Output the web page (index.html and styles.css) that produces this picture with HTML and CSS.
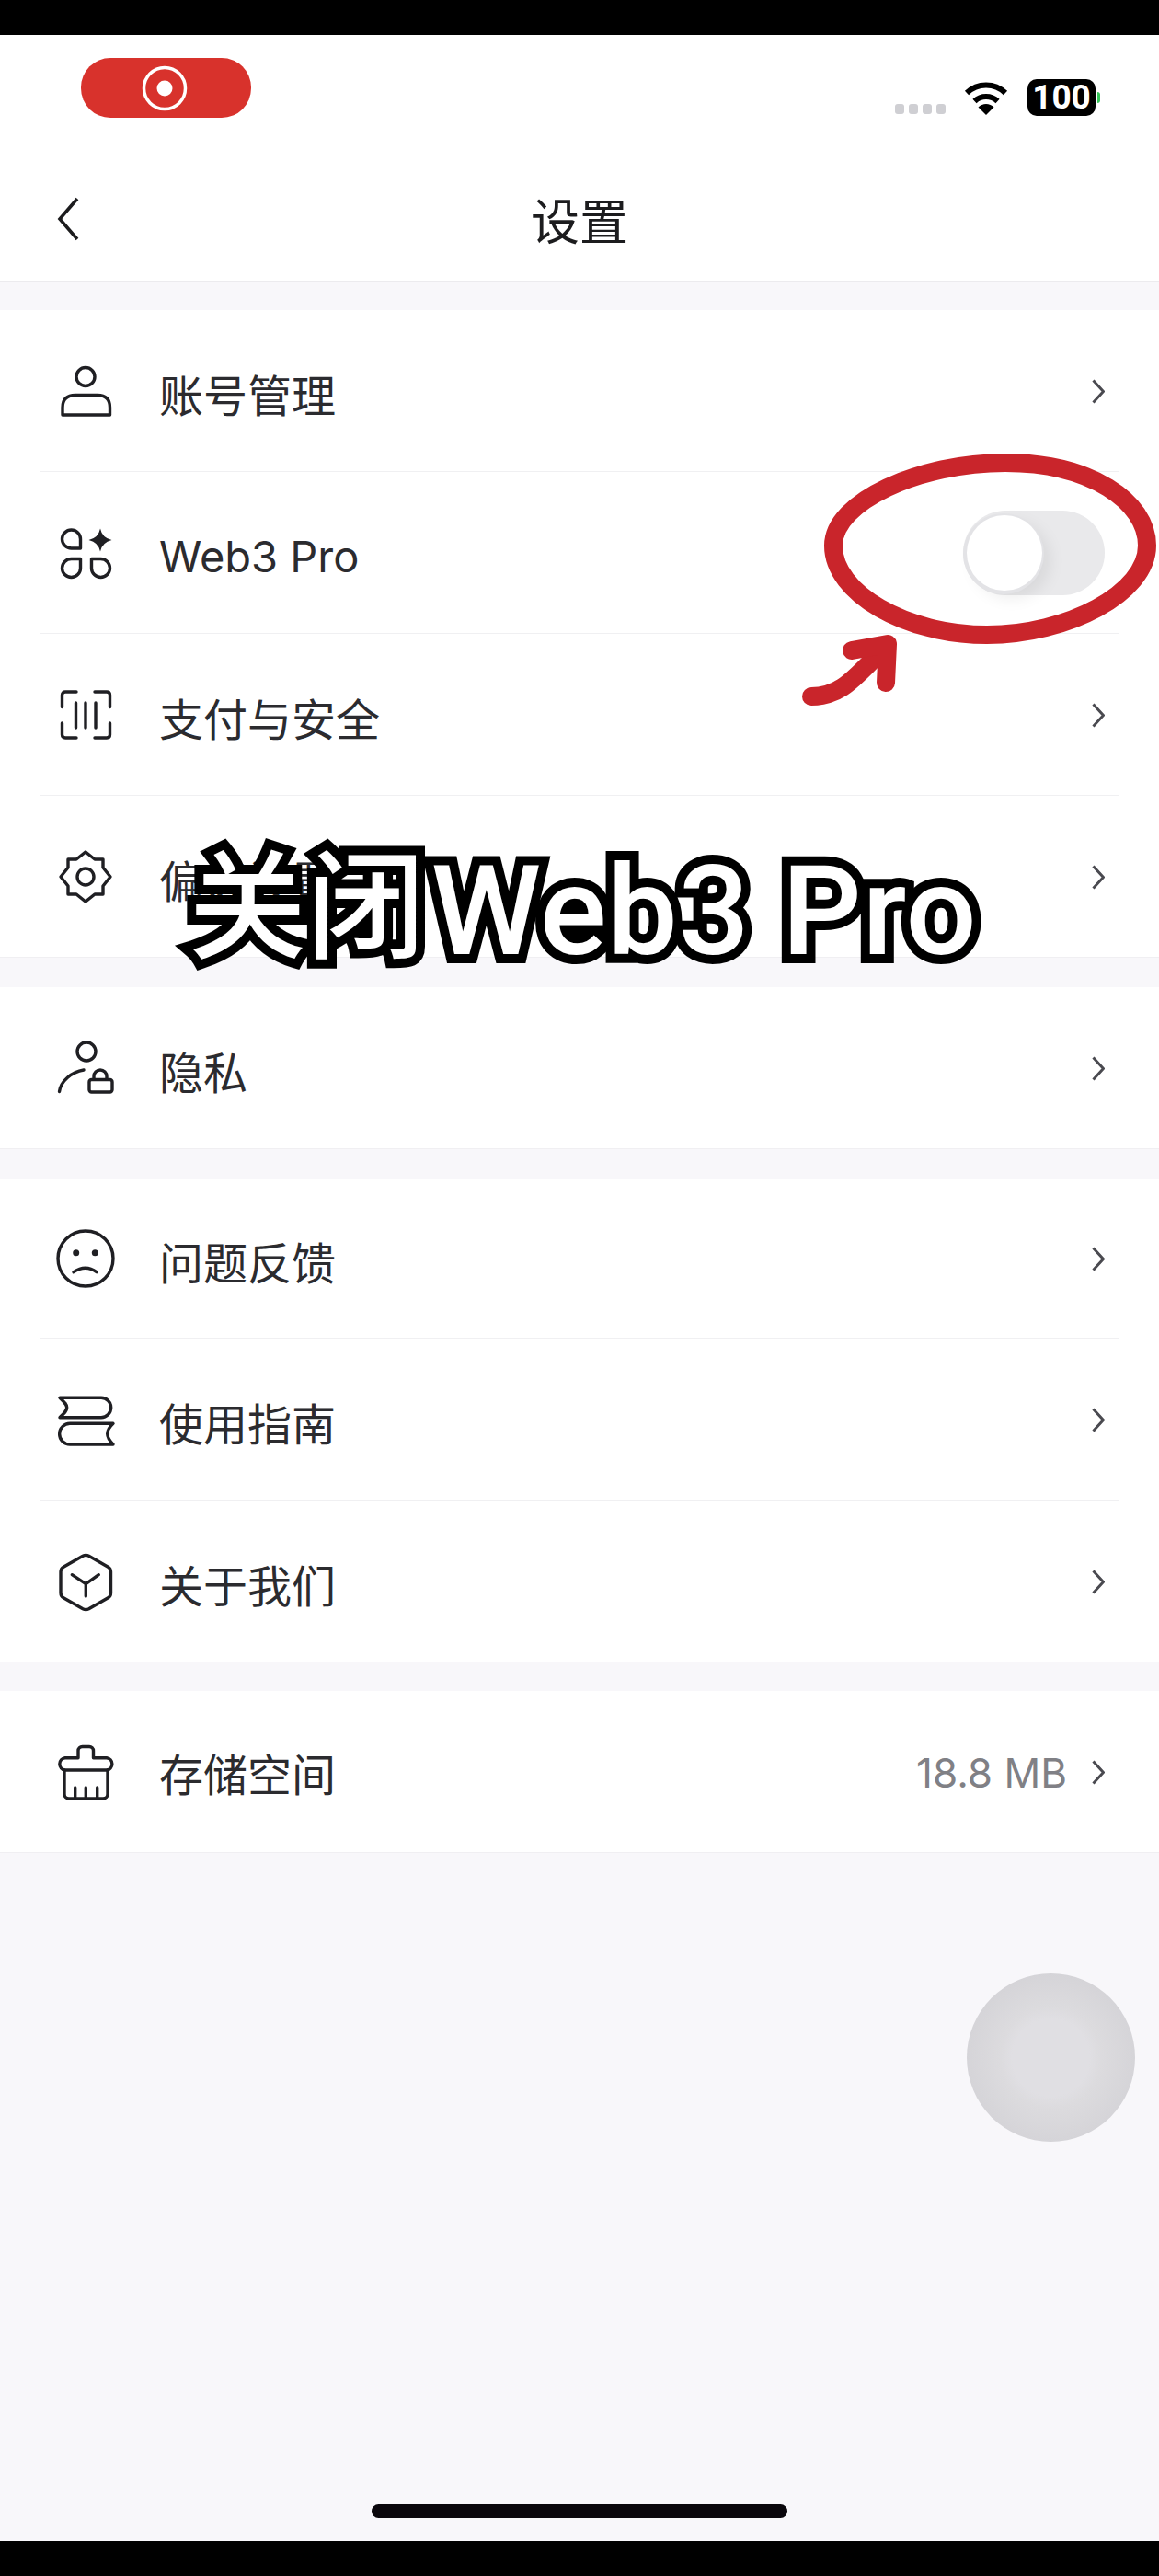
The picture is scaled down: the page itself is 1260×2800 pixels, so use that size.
FILE: index.html
```html
<!DOCTYPE html>
<html lang="zh-CN">
<head>
  <meta charset="UTF-8" />
  <meta name="viewport" content="width=device-width, initial-scale=1.0"/>
  <title>设置</title>
  <link rel="stylesheet" href="styles.css">
</head>
<body>
  <div class="screen">
    <div class="black-bar"></div>

    <div class="status">
      <div class="rec-pill">
        <svg width="56" height="56" viewBox="0 0 56 56"><circle cx="28" cy="28" r="22.5" fill="none" stroke="#fff" stroke-width="3.5"/><circle cx="28" cy="28" r="8.5" fill="#fff"/></svg>
      </div>
      <div class="status-right">
        <div class="signal"><i></i><i></i><i></i><i></i></div>
        <svg class="wifi" width="48" height="37" viewBox="0 0 48 37"><path d="M3 13A30 30 0 0 1 45 13M11.5 22A18 18 0 0 1 36.5 22" fill="none" stroke="#000" stroke-width="6"/><path d="M24 37L15.5 28.5A12 12 0 0 1 32.5 28.5Z" fill="#000"/></svg>
        <div class="battery">100</div>
        <div class="battery-tip"></div>
      </div>
    </div>

    <div class="nav">
      <svg class="back" width="24" height="48" viewBox="0 0 24 48"><path d="M22 2L3 24L22 46" fill="none" stroke="#1c1c1e" stroke-width="3.6"/></svg>
      <div class="nav-title">设置</div>
    </div>

    <div class="content">
      <div class="group">
        <div class="row">
          <svg class="ico" viewBox="0 0 64 64"><circle cx="32" cy="16.5" r="10"/><path d="M7 58V50Q7 36.500 21 36.500H45Q58.500 36.500 58.500 50V58Z"/></svg>
          <span class="label">账号管理</span>
          <svg class="chev" viewBox="0 0 14 27"><path d="M1.500 1.500L12.500 13.500L1.500 25.500"/></svg>
        </div>
        <div class="row">
          <svg class="ico" viewBox="0 0 64 64"><path d="M16.500 7A10 10 0 0 0 16.500 27H26.500V17A10 10 0 0 0 16.500 7Z"/><path d="M16.500 58.500A10 10 0 0 1 16.500 38.500H26.500V48.500A10 10 0 0 1 16.500 58.500Z"/><path d="M48.500 58.500A10 10 0 0 0 48.500 38.500H38.500V48.500A10 10 0 0 0 48.500 58.500Z"/><path class="solid" d="M48 5.500Q50 15.500 60.500 18Q50 20.500 48 30.500Q46 20.500 35.500 18Q46 15.500 48 5.500Z"/></svg>
          <span class="label label-latin">Web3 Pro</span>
          <div class="toggle"><div class="knob"></div></div>
        </div>
        <div class="row">
          <svg class="ico" viewBox="0 0 64 64"><path d="M22 7H10Q6.500 7 6.500 10.500V23.500M42 7H55Q58.500 7 58.500 10.500V23.500M22 57H10Q6.500 57 6.500 53.500V41M42 57H55Q58.500 57 58.500 53.500V41M21.500 19V46M32 19V46M43 19V46"/></svg>
          <span class="label">支付与安全</span>
          <svg class="chev" viewBox="0 0 14 27"><path d="M1.500 1.500L12.500 13.500L1.500 25.500"/></svg>
        </div>
        <div class="row">
          <svg class="ico" viewBox="0 0 64 64"><path d="M32 5L42 13H51V22L59 32L51 42V51H42L32 59L22 51H13V42L5 32L13 22V13H22Z"/><circle cx="32" cy="32" r="9"/></svg>
          <span class="label">偏好设置</span>
          <svg class="chev" viewBox="0 0 14 27"><path d="M1.500 1.500L12.500 13.500L1.500 25.500"/></svg>
        </div>
      </div>

      <div class="group">
        <div class="row">
          <svg class="ico" viewBox="0 0 64 64"><circle cx="33" cy="14" r="10"/><path d="M3.500 57.500C5 46 17 36 30 34"/><rect x="36" y="44.500" width="25" height="13.500" rx="2.500"/><path d="M41 44V41A7 7 0 0 1 55 41V44"/></svg>
          <span class="label">隐私</span>
          <svg class="chev" viewBox="0 0 14 27"><path d="M1.500 1.500L12.500 13.500L1.500 25.500"/></svg>
        </div>
      </div>

      <div class="group">
        <div class="row row-short">
          <svg class="ico" viewBox="0 0 64 64"><circle cx="32" cy="32" r="30"/><circle class="solid" cx="21.700" cy="25.700" r="3.500"/><circle class="solid" cx="42.300" cy="25.700" r="3.500"/><path d="M19 46.700Q32 38 44 46.700"/></svg>
          <span class="label">问题反馈</span>
          <svg class="chev" viewBox="0 0 14 27"><path d="M1.500 1.500L12.500 13.500L1.500 25.500"/></svg>
        </div>
        <div class="row">
          <svg class="ico" viewBox="0 0 64 64"><path d="M4 8.300H49A10.700 10.700 0 0 1 49 29.700H4C9 25 11.700 22.500 11.700 19C11.700 15.500 9 13 4 8.300Z"/><path d="M62 36.300H15A11.300 11.300 0 0 0 15 59H62C57 54 55.700 51 55.700 47.600C55.700 44 57 41 62 36.300Z"/></svg>
          <span class="label">使用指南</span>
          <svg class="chev" viewBox="0 0 14 27"><path d="M1.500 1.500L12.500 13.500L1.500 25.500"/></svg>
        </div>
        <div class="row">
          <svg class="ico" viewBox="0 0 64 64"><path d="M29 4.200Q32.300 2.500 35.600 4.200L56.500 16.200Q59.500 18 59.500 21.500V44.500Q59.500 48 56.500 49.800L35.600 61.800Q32.300 63.500 29 61.800L8 49.800Q5 48 5 44.500V21.500Q5 18 8 16.200Z"/><path d="M17.300 24.700L32.300 34.700L46.300 24.700M32.300 34.700V48"/></svg>
          <span class="label">关于我们</span>
          <svg class="chev" viewBox="0 0 14 27"><path d="M1.500 1.500L12.500 13.500L1.500 25.500"/></svg>
        </div>
      </div>

      <div class="group">
        <div class="row">
          <svg class="ico" viewBox="0 0 64 64"><path d="M24 16.700V9A4.500 4.500 0 0 1 28.500 4.500H36A4.500 4.500 0 0 1 40.500 9V16.700H55A6.700 6.700 0 0 1 55 30H9.700A6.700 6.700 0 0 1 9.700 16.700Z"/><path d="M9 30V56A5 5 0 0 0 14 61H51A5 5 0 0 0 56 56V30M20.700 49V61M32.300 49V61M44.700 49V61"/></svg>
          <span class="label label-low">存储空间</span>
          <span class="value">18.8 MB</span>
          <svg class="chev" viewBox="0 0 14 27"><path d="M1.500 1.500L12.500 13.500L1.500 25.500"/></svg>
        </div>
      </div>
    </div>

    <div class="home-area"><div class="home-bar"></div></div>
    <div class="black-bar"></div>

    <!-- things drawn on top of the recording -->
    <div class="fab"></div>
    <svg class="scribble" width="1260" height="800" viewBox="0 0 1260 800">
      <path d="M906 593C906 545 1000 503 1093 503C1185 503 1247 545 1247 593C1247 645 1160 690 1073 690C985 690 906 645 906 593Z"/>
      <path d="M882 757C915 757 930 735 958 708"/>
      <path d="M926 707L965 700L963 742"/>
    </svg>
    <div class="caption"><span class="caption-cjk">关闭</span>Web3 Pro</div>
  </div>
</body>
</html>
```

FILE: styles.css
```css
* {
  box-sizing: border-box;
}
body {
  margin: 0;
  font-family: "Noto Sans CJK SC", sans-serif;
  color: #2b2b2f;
}
.screen {
  position: relative;
  width: 1260px;
  height: 2800px;
  display: flex;
  flex-direction: column;
  overflow: hidden;
  background: #f8f7fa;
}
.black-bar {
  height: 38px;
  flex: none;
  background: #000;
}

/* status bar */
.status {
  height: 132px;
  flex: none;
  display: flex;
  justify-content: space-between;
  align-items: flex-start;
  padding: 25px 64px 0 88px;
  background: #fff;
}
.rec-pill {
  width: 185px;
  height: 65px;
  border-radius: 32px;
  background: #d8322c;
  display: flex;
  align-items: center;
  justify-content: center;
}
.rec-pill svg {
  margin-right: 4px;
}
.status-right {
  display: flex;
  align-items: flex-end;
  margin-top: 23px;
}
.signal {
  display: flex;
  gap: 5px;
  margin: 0 20px 2px 0;
}
.signal i {
  width: 10px;
  height: 11px;
  border-radius: 3px;
  background: #cfcfd3;
}
.wifi {
  margin: 0 21px 1px 0;
}
.battery {
  width: 74px;
  height: 40px;
  border-radius: 10px;
  background: #000;
  color: #fff;
  font-family: Roboto, sans-serif;
  font-size: 37px;
  font-weight: 700;
  line-height: 40px;
  text-align: center;
}
.battery-tip {
  width: 3px;
  height: 12px;
  margin: 0 0 14px 2px;
  border-radius: 0 3px 3px 0;
  background: #35c759;
}

/* nav */
.nav {
  height: 137px;
  flex: none;
  display: grid;
  grid-template-columns: 1fr auto 1fr;
  align-items: center;
  background: #fff;
  border-bottom: 2px solid #ecebee;
}
.back {
  margin-left: 62px;
}
.nav-title {
  font-size: 53px;
  line-height: 70px;
  color: #1c1c1e;
}

/* list */
.content {
  flex: 1;
  padding-top: 30px;
}
.group {
  background: #fff;
  border-bottom: 1px solid #f0eff2;
  margin-bottom: 32px;
}
.group:nth-child(3) {
  margin-bottom: 31px;
}
.row {
  height: 176px;
  margin: 0 44px;
  padding: 0 15px 0 17px;
  display: flex;
  align-items: center;
  border-bottom: 1px solid #f0f0f2;
}
.row:last-child {
  height: 175px;
  border-bottom: none;
}
.row-short {
  height: 174px;
}
.ico {
  width: 64px;
  height: 64px;
  flex: none;
  margin-right: 48px;
  overflow: visible;
  fill: none;
  stroke: #1f1f23;
  stroke-width: 3.4;
  stroke-linecap: round;
  stroke-linejoin: round;
}
.ico .solid {
  fill: #1f1f23;
  stroke: none;
}
.label {
  flex: 1;
  font-size: 48px;
  line-height: 60px;
  position: relative;
  top: 2px;
}
.label-latin {
  font-family: Inter, sans-serif;
  font-size: 47px;
  top: 4px;
}
.label-low {
  top: 0;
}
.value {
  margin-right: 27px;
  font-family: Inter, sans-serif;
  font-size: 44px;
  color: #808085;
  position: relative;
  top: 1px;
}
.chev {
  width: 14px;
  height: 27px;
  flex: none;
  margin-top: 2px;
  fill: none;
  stroke: #4a4a50;
  stroke-width: 3;
}

/* toggle, off */
.toggle {
  width: 154px;
  height: 92px;
  border-radius: 46px;
  background: #e9e9eb;
  position: relative;
}
.knob {
  position: absolute;
  left: 4px;
  top: 5px;
  width: 82px;
  height: 82px;
  border-radius: 50%;
  background: #fff;
  box-shadow: -1px 1px 0 3px #e3e3e6, 8px 8px 18px rgba(0,0,0,0.08);
}

/* bottom */
.home-area {
  height: 62px;
  flex: none;
  display: flex;
  justify-content: center;
}
.home-bar {
  width: 452px;
  height: 15px;
  border-radius: 8px;
  background: #0a070c;
  margin-top: 22px;
}
.fab {
  position: absolute;
  left: 1051px;
  top: 2145px;
  width: 183px;
  height: 183px;
  border-radius: 50%;
  background: radial-gradient(circle, #e0dfe3 0, #e0dfe3 42px, #dcdbde 55px, #d5d4d8 92px);
}
.scribble {
  position: absolute;
  left: 0;
  top: 0;
  fill: none;
  stroke: #c9252b;
  stroke-width: 20;
  stroke-linecap: round;
  stroke-linejoin: round;
}
.caption {
  position: absolute;
  left: 205px;
  top: 903px;
  font-family: Roboto, "Noto Sans CJK SC", sans-serif;
  font-size: 136px;
  font-weight: 500;
  letter-spacing: 0.7px;
  line-height: 170px;
  white-space: nowrap;
  color: #fff;
  -webkit-text-stroke: 20px #000;
  paint-order: stroke fill;
}
.caption-cjk {
  font-size: 128px;
  vertical-align: 5px;
  margin-right: 6px;
}
```
